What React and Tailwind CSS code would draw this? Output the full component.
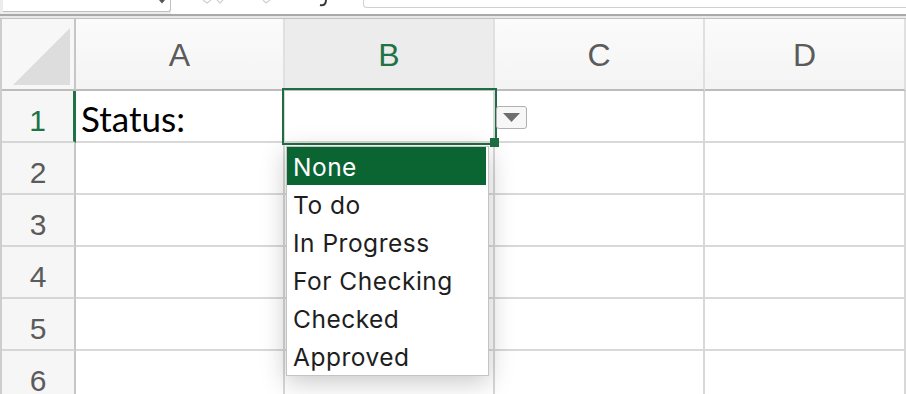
export default function App() {
  const cols = ["A", "B", "C", "D"];
  const rows = [1, 2, 3, 4, 5, 6];
  const items = ["None", "To do", "In Progress", "For Checking", "Checked", "Approved"];
  return (
    <div className="relative w-[906px] h-[394px] overflow-hidden bg-white font-['Liberation_Sans',Arial,sans-serif]">
      {/* formula bar strip */}
      <div className="flex h-[14px] bg-[#ececec] pl-[3px]">
        <div className="relative h-[12px] w-[168px] bg-white border-r border-b border-[#c0c0c0] rounded-br-[3px]">
          <svg className="absolute left-[156px] top-0" width="6" height="4" viewBox="0 0 6 4">
            <polygon points="0,0 6,0 3,3.5" fill="#555" />
          </svg>
        </div>
        <div className="h-full w-[192px] bg-white">
          <svg width="192" height="14" viewBox="0 0 192 14">
            <path d="M32 0 L36 3 L40 0 M46 0 L49 3 L52 0" stroke="#d0d0d0" strokeWidth="1.2" fill="none" />
            <path d="M92 0 L95 3 L99 0" stroke="#d0d0d0" strokeWidth="1.2" fill="none" />
            <path d="M155 0 C155 4 153 6 149 5" stroke="#3a3a3a" strokeWidth="2" fill="none" />
          </svg>
        </div>
        <div className="flex-1 h-full bg-white">
          <div className="h-[8px] border-l border-b border-[#d0d0d0] rounded-bl-[4px]" />
        </div>
      </div>
      <div className="h-[2px] bg-[#a9a9a9]" />
      <div className="h-[2px] bg-[#e8e8e8]" />
      <div className="h-[1px] bg-[#c2c2c2]" />

      {/* grid */}
      <div className="grid grid-cols-[74px_209px_210px_210px_1fr] grid-rows-[72px_repeat(6,52px)] border-l-2 border-[#cdcdcd]">
        <div className="bg-[#f7f7f7] border-r-2 border-b-2 border-r-[#c6c6c6] border-b-[#bcbcbc]">
          <svg width="72" height="70" viewBox="0 0 72 70" className="block">
            <polygon points="11,66 68,66 68,9" fill="#dddddd" />
          </svg>
        </div>
        {cols.map((c) => (
          <div
            key={c}
            className={
              "flex items-center justify-center pt-[2px] border-b-2 border-r-2 border-b-[#bcbcbc] border-r-[#e0e0e0] text-[32px] leading-none " +
              (c === "B" ? "bg-[#ececec] text-[#217346]" : "bg-gradient-to-b from-[#fbfbfb] to-[#f4f4f4] text-[#5b5b5b]")
            }
          >
            {c}
          </div>
        ))}
        {rows.map((r) => (
          <Row key={r} r={r} />
        ))}
      </div>

      {/* selection */}
      <div className="absolute left-[282px] top-[88px] w-[215px] h-[57px] border-2 border-[#1f6e43]" />
      <div className="absolute left-[490px] top-[138px] w-[9px] h-[9px] bg-[#1f6e43]" />

      {/* dropdown button */}
      <div className="absolute left-[496px] top-[106px] w-[31px] h-[23px] flex items-center justify-center bg-[#f7f7f7] border border-[#b0b0b0] rounded-[3px]">
        <svg width="17" height="9" viewBox="0 0 17 9">
          <polygon points="0,0 17,0 8.5,9" fill="#6e6e6e" />
        </svg>
      </div>

      {/* list */}
      <div className="absolute left-[286px] top-[146px] w-[203px] bg-white border border-[#c4c4c4] pr-[2px] shadow-[0_6px_24px_rgba(0,0,0,0.22)] font-['Inter',sans-serif]">
        {items.map((it, i) => (
          <div
            key={it}
            className={
              "h-[38px] flex items-center pl-[6px] pt-[3px] text-[24.5px] leading-none tracking-[0.5px] " +
              (i === 0 ? "bg-[#0a6532] text-white" : "text-[#1e1e1e]")
            }
          >
            {it}
          </div>
        ))}
      </div>
    </div>
  );
}

function Row({ r }) {
  const active = r === 1;
  return (
    <>
      <div
        className={
          "flex items-center justify-center pt-[10px] bg-[#f6f6f6] border-b-2 border-b-[#d6d6d6] text-[30px] leading-none " +
          (active ? "border-r-[3px] border-r-[#217346] text-[#217346]" : "border-r-2 border-r-[#c6c6c6] text-[#5b5b5b]")
        }
      >
        {r}
      </div>
      {[0, 1, 2, 3].map((i) => (
        <div key={i} className="flex items-center border-b-2 border-r-2 border-[#d8d8d8] bg-white">
          {active && i === 0 ? (
            <span className="pl-[5px] pt-[5px] text-[35px] leading-none text-black font-['Lato',sans-serif]">Status:</span>
          ) : null}
        </div>
      ))}
    </>
  );
}
